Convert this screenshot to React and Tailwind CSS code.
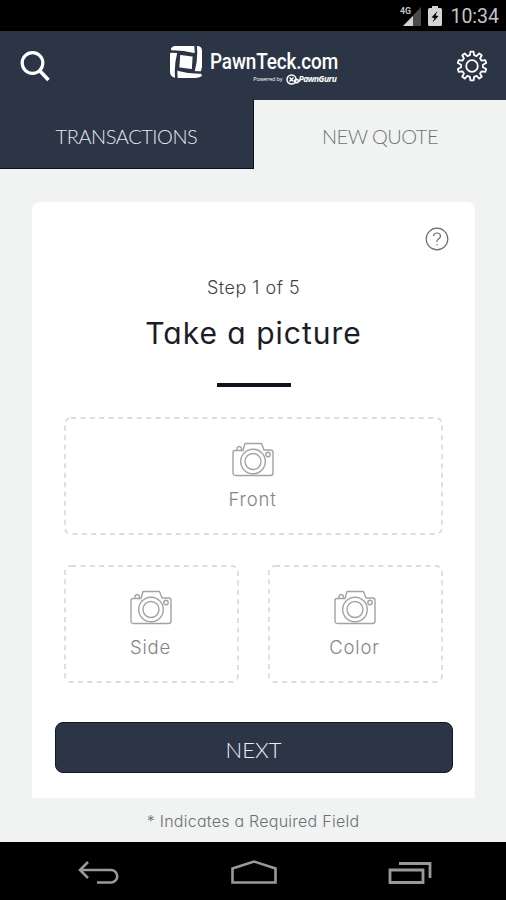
import React from 'react';

const ROUND = "font-['Inter','Noto_Sans',sans-serif] [font-feature-settings:'cv11']";
const CAPS = "font-['Lato','Open_Sans',sans-serif]";

// outline of the settings cog
const gearPath = (teeth, outer, inner) => {
  const step = (Math.PI * 2) / teeth;
  const points = [];
  for (let i = 0; i < teeth; i++) {
    const a = i * step - Math.PI / 2;
    [[-0.31, inner], [-0.17, outer], [0.17, outer], [0.31, inner]].forEach(([t, r]) => {
      points.push(`${(Math.cos(a + t * step) * r).toFixed(2)} ${(Math.sin(a + t * step) * r).toFixed(2)}`);
    });
  }
  return `M${points.join('L')}Z`;
};

function StatusBar() {
  return (
    <div className="h-[31px] shrink-0 bg-black flex items-center justify-end pr-[7px] text-[#c4c4c4] font-['Roboto',sans-serif]">
      <svg width="22" height="22" viewBox="0 0 22 22" className="mr-[6px]">
        <path d="M21 2V21H3Z" fill="#4a4a4a" />
        <path d="M13 11V21H3Z" fill="#d4d4d4" />
        <text x="0" y="9" fontSize="9.5" fontWeight="700" fill="#c4c4c4" textLength="11" lengthAdjust="spacingAndGlyphs">4G</text>
      </svg>
      <svg width="14" height="20" viewBox="0 0 14 20" className="mr-[8px]">
        <path d="M4 0h6v2h2.500a1.500 1.500 0 0 1 1.500 1.500V18.500a1.500 1.500 0 0 1-1.500 1.500H1.500A1.500 1.500 0 0 1 0 18.500V3.500A1.500 1.500 0 0 1 1.500 2H4Z" fill="#d4d4d4" />
        <path d="M9.500 5 3.500 11.500 6.500 12 4.500 16.500 10.500 10 7.500 9.500Z" fill="#000" />
      </svg>
      <span className="text-[19.5px] leading-none pt-[2px]">10:34</span>
    </div>
  );
}

function Logo() {
  return (
    <div className="flex items-start text-white">
      <svg width="34" height="34" viewBox="0 0 34 34">
        <path d="M5 1H28Q33 1 33 6V22Q31 27 33 31Q30 33 26 33H7Q1 32 1 27V9Q3 6 2 3Z" fill="#fff" />
        <g fill="none" stroke="#2c3546" strokeWidth="2.6">
          <path d="M0 6.500Q13 6 26 9.500" />
          <path d="M26.500 0Q28 13 24.500 26" />
          <path d="M34 27.500Q21 28 8.500 24.500" />
          <path d="M7.500 34Q6 21 9.500 8" />
        </g>
        <path d="M10 8.500 25 10.500 24 25.500 9 23.500Z" fill="#fff" stroke="#2c3546" strokeWidth="2.6" />
      </svg>
      <div className="ml-[7px] pt-[5px] w-[127px]">
        <div className="text-[21.5px] leading-[24px] font-medium font-['Roboto',sans-serif] whitespace-nowrap tracking-[-0.15px] origin-left scale-x-[0.88]">PawnTeck.com</div>
        <div className="flex items-center justify-end h-[10px] font-['Open_Sans',sans-serif]">
          <span className="text-[5.5px] leading-[8px] tracking-[-0.1px] whitespace-nowrap mr-[3px]">Powered by</span>
          <svg width="13" height="11" viewBox="0 0 13 11" fill="none" stroke="#fff" strokeWidth="1.5">
            <circle cx="5.500" cy="5.500" r="4.500" />
            <path d="M3.500 3.500 7.500 7.500M7.500 3.500 3.500 7.500" />
            <circle cx="10.500" cy="7" r="1.800" />
          </svg>
          <span className="text-[8.5px] leading-[10px] italic font-bold tracking-[-0.5px] w-[38px]">PawnGuru</span>
        </div>
      </div>
    </div>
  );
}

function Camera() {
  return (
    <svg width="42" height="35" viewBox="0 0 42 35" fill="none" stroke="#a3a3a3" strokeWidth="1.4" strokeLinejoin="round">
      <path d="M3 8.500H11L13 1.500H29.500L32 8H38.500Q41 8 41 10.500V31Q41 33.500 38.500 33.500H3.500Q1 33.500 1 31V10.500Q1 8.500 3 8.500Z" />
      <path d="M5 8V6Q7.200 3 9.400 6V8" />
      <circle cx="21" cy="19.500" r="12.300" fill="#fff" />
      <circle cx="21" cy="19.500" r="8" />
      <circle cx="36" cy="12.500" r="2.200" />
    </svg>
  );
}

function PhotoSlot({ label }) {
  return (
    <button className="h-[118px] w-full relative flex flex-col items-center pt-[25px] pr-[2px]">
      <svg className="absolute inset-0 w-full h-full" fill="none">
        <rect x="1" y="1" rx="6" className="w-[calc(100%-2px)] h-[calc(100%-2px)]" stroke="#dcdcdc" strokeWidth="1.8" strokeDasharray="5 4.400" />
      </svg>
      <Camera />
      <span className={`${ROUND} mt-[10px] text-[18.5px] leading-[24px] tracking-[0.8px] font-light text-[#858585]`}>{label}</span>
    </button>
  );
}

function App() {
  return (
    <div className="w-[506px] h-[900px] overflow-hidden flex flex-col bg-[#f1f3f3]">
      <StatusBar />

      <header className="h-[69px] shrink-0 bg-[#2c3546] flex items-start justify-between pl-[20px] pr-[18px]">
        <svg width="30" height="32" viewBox="0 0 30 32" className="mt-[19px]" fill="none" stroke="#fff">
          <circle cx="12.500" cy="13" r="10.300" strokeWidth="3.200" />
          <path d="M19.500 20.500 28.500 30" strokeWidth="3.600" />
        </svg>
        <div className="mt-[14px] mr-[1px]">
          <Logo />
        </div>
        <svg width="32" height="32" viewBox="-16 -16 32 32" className="mt-[19px]" fill="none" stroke="#fff" strokeWidth="1.8" strokeLinejoin="round">
          <path d={gearPath(10, 14.5, 11)} />
          <circle r="5.800" />
        </svg>
      </header>

      <nav className={`${CAPS} h-[69px] shrink-0 grid grid-cols-[254px_252px] text-[20px] font-light`}>
        <button className="bg-[#2c3546] text-[#e6e8ec] border-b border-r border-[#0b1020] pt-[4px] tracking-[-0.45px]">TRANSACTIONS</button>
        <button className="text-[#707376] pt-[3px] tracking-[-0.5px]">NEW QUOTE</button>
      </nav>

      <main className="mt-[33px] ml-[32px] w-[443px] h-[596px] shrink-0 bg-white rounded-t-lg flex flex-col items-center">
        <div className="w-full flex justify-end pt-[25px] pr-[26px]">
          <svg width="24" height="24" viewBox="0 0 24 24" fill="none" stroke="#6b6b6b" strokeWidth="1.2">
            <circle cx="12" cy="12" r="10.800" />
            <path d="M8.500 9Q8.800 6 12 6T15.500 9Q15.500 10.800 13.500 12T12 15" />
            <path d="M12 17V18.300" />
          </svg>
        </div>
        <p className={`${ROUND} mt-[25px] text-[18px] leading-[24px] font-light tracking-[0.5px] text-[#3f3f46]`}>Step 1 of 5</p>
        <h1 className={`${ROUND} mt-[14px] text-[30px] leading-[38px] tracking-[1px] text-[#1b1c28]`}>Take a picture</h1>
        <div className="mt-[31px] w-[74px] h-[4px] bg-[#11131c]" />
        <div className="mt-[30px] w-[379px] grid grid-cols-2 gap-x-[29px] gap-y-[30px]">
          <div className="col-span-2">
            <PhotoSlot label="Front" />
          </div>
          <PhotoSlot label="Side" />
          <PhotoSlot label="Color" />
        </div>
        <button className={`${CAPS} mt-[39px] w-[398px] h-[51px] rounded-lg bg-[#2c3546] border border-[#0e1630] text-[#eceef2] text-[22px] font-light pt-[4px]`}>
          NEXT
        </button>
      </main>

      <p className={`${ROUND} h-[44px] shrink-0 pt-[11px] text-center text-[16px] leading-[24px] font-light tracking-[0.25px] text-[#6c7074]`}>
        * Indicates a Required Field
      </p>

      <footer className="h-[58px] shrink-0 bg-black flex items-start justify-between pt-[18px] pl-[78px] pr-[74px]">
        <svg width="42" height="26" viewBox="0 0 42 26" fill="none" stroke="#999" strokeWidth="2.600">
          <path d="M10 2 2 10 10 18M2 10H33A6.200 6.200 0 0 1 33 22.500H19" />
        </svg>
        <svg width="46" height="26" viewBox="0 0 46 26" fill="none" stroke="#999" strokeWidth="2.600">
          <path d="M1.500 22.500V8.500L23 1.500 44.500 8.500V22.500Z" />
        </svg>
        <svg width="44" height="26" viewBox="0 0 44 26" fill="none" stroke="#999" strokeWidth="2.800">
          <path d="M2 10H35V22.500H2ZM11 3.500H42V18" />
        </svg>
      </footer>
    </div>
  );
}

export default App;
